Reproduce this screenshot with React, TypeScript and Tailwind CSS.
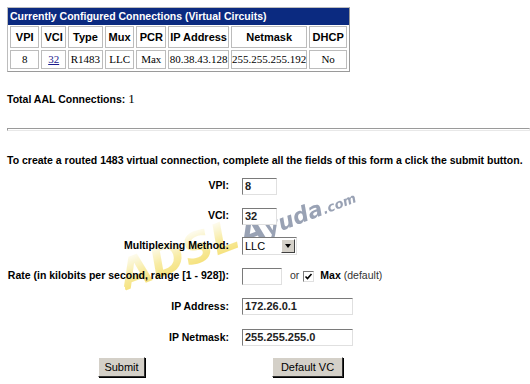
const cols = ["VPI", "VCI", "Type", "Mux", "PCR", "IP Address", "Netmask", "DHCP"];
const widths = ["w-[30px]", "w-[25px]", "w-[35px]", "w-[30px]", "w-[30px]", "w-[61px]", "w-[76px]", "w-[38px]"];

function Field({ value, w }: { value: string; w: string }) {
    return (
        <div className={`${w} h-[17px] bg-white border border-t-[#7a7a7a] border-l-[#7a7a7a] border-b-[#e0e0e0] border-r-[#e0e0e0] text-[11px] leading-[15px] pl-[2px] text-[#222]`}>
            {value}
        </div>
    );
}

export default function App() {
    return (
        <div className="relative w-[530px] h-[384px] bg-white overflow-hidden font-['Liberation_Sans',Arial,sans-serif] text-black">
            {/* connections table */}
            <div className="pt-[7px] pl-[7px]">
                <div className="w-[343px] border border-[#bdbdbd] border-r-[#9a9a9a] border-b-[#9a9a9a]">
                    <div className="h-[17px] bg-[#0b2a80] text-white font-bold text-[10.5px] leading-[17px] pl-[2px]">
                        Currently Configured Connections (Virtual Circuits)
                    </div>
                    <table className="border-separate border-spacing-[2px] mt-[-1px]">
                        <tbody>
                            <tr>
                                {cols.map((c, i) => (
                                    <td key={c} className={`${widths[i]} h-[22px] border border-[#bcbcbc] text-center font-bold text-[11px] p-0`}>
                                        {c}
                                    </td>
                                ))}
                            </tr>
                            <tr className="font-['Liberation_Serif','Times_New_Roman',serif] text-[11px]">
                                <td className="h-[19px] border border-[#bcbcbc] text-center p-0">8</td>
                                <td className="border border-[#bcbcbc] text-center p-0">
                                    <span className="text-[#1a1a8c] underline">32</span>
                                </td>
                                <td className="border border-[#bcbcbc] text-center p-0">R1483</td>
                                <td className="border border-[#bcbcbc] text-center p-0">LLC</td>
                                <td className="border border-[#bcbcbc] text-center p-0">Max</td>
                                <td className="border border-[#bcbcbc] text-center p-0">80.38.43.128</td>
                                <td className="border border-[#bcbcbc] text-center p-0">255.255.255.192</td>
                                <td className="border border-[#bcbcbc] text-center p-0">No</td>
                            </tr>
                        </tbody>
                    </table>
                </div>
            </div>

            <div className="pl-[7px] mt-[20px] text-[10.5px] font-bold leading-[14px]">
                Total AAL Connections:{" "}
                <span className="font-normal font-['Liberation_Serif','Times_New_Roman',serif] text-[13px]">1</span>
            </div>

            <div className="ml-[7px] mt-[22px] h-[3px] border border-t-[#9a9a9a] border-l-[#9a9a9a] border-b-[#e8e8e8] border-r-[#e8e8e8]" />

            <div className="pl-[7px] mt-[22px] text-[10.5px] font-bold leading-[14px] whitespace-nowrap">
                To create a routed 1483 virtual connection, complete all the fields of this form a click the submit button.
            </div>

            {/* watermark, sits under the form */}
            <div className="absolute left-[129px] top-[255px] w-[270px] h-[44px] rotate-[-21deg] origin-bottom-left pointer-events-none whitespace-nowrap font-['DejaVu_Sans',sans-serif] font-bold italic flex items-baseline leading-none">
                <span className="text-[42px] bg-linear-to-t from-[#f2d640] via-[#f7e890] to-white bg-clip-text text-transparent opacity-80">ADSL</span>
                <span className="text-[32px] text-[#8892a8] opacity-85 ml-[3px]">A</span>
                <span className="text-[22px] text-[#8892a8] opacity-85">yuda</span>
                <span className="text-[13px] text-[#8892a8] opacity-85">.com</span>
            </div>

            {/* form */}
            <div className="relative grid grid-cols-[229px_1fr] gap-x-[13px] mt-[4px] text-[10.5px] font-bold">
                <div className="h-[30px] flex items-center justify-end">VPI:</div>
                <div className="h-[30px] flex items-center"><Field value="8" w="w-[35px]" /></div>

                <div className="h-[30px] flex items-center justify-end">VCI:</div>
                <div className="h-[30px] flex items-center"><Field value="32" w="w-[35px]" /></div>

                <div className="h-[30px] flex items-center justify-end">Multiplexing Method:</div>
                <div className="h-[30px] flex items-center">
                    <div className="w-[55px] h-[18px] flex bg-white border border-t-[#7a7a7a] border-l-[#7a7a7a] border-b-[#e0e0e0] border-r-[#e0e0e0] font-normal text-[11px]">
                        <div className="flex-1 leading-[16px] pl-[2px]">LLC</div>
                        <div className="w-[14px] h-[14px] m-[1px] bg-[#d4d0c8] border border-t-white border-l-white border-b-[#404040] border-r-[#404040] flex items-center justify-center">
                            <div className="w-0 h-0 border-l-[3px] border-r-[3px] border-t-[4px] border-l-transparent border-r-transparent border-t-black" />
                        </div>
                    </div>
                </div>

                <div className="h-[30px] flex items-center justify-end whitespace-nowrap">Rate (in kilobits per second, range [1 - 928]):</div>
                <div className="h-[30px] flex items-center">
                    <Field value="" w="w-[40px]" />
                    <span className="font-normal ml-[8px] text-[#333]">or</span>
                    <div className="ml-[4px] w-[11px] h-[11px] bg-white border border-t-[#7a7a7a] border-l-[#7a7a7a] border-b-[#e0e0e0] border-r-[#e0e0e0] flex items-center justify-center">
                        <svg width="9" height="9" viewBox="0 0 9 9">
                            <path d="M1.5 4.5 L3.5 6.5 L7.5 2" stroke="#000" strokeWidth="1.6" fill="none" />
                        </svg>
                    </div>
                    <span className="ml-[6px]">Max</span>
                    <span className="ml-[3px] font-normal text-[#333]">(default)</span>
                </div>

                <div className="h-[31px] flex items-center justify-end">IP Address:</div>
                <div className="h-[31px] flex items-center"><Field value="172.26.0.1" w="w-[111px]" /></div>

                <div className="h-[31px] flex items-center justify-end">IP Netmask:</div>
                <div className="h-[31px] flex items-center"><Field value="255.255.255.0" w="w-[111px]" /></div>
            </div>

            <div className="flex mt-[4px] text-[11px]">
                <button className="ml-[98px] w-[47px] h-[20px] bg-[#d4d0c8] border border-t-white border-l-white border-b-[#303030] border-r-[#303030] shadow-[1px_1px_0_#000]">
                    Submit
                </button>
                <button className="ml-[127px] w-[71px] h-[20px] bg-[#d4d0c8] border border-t-white border-l-white border-b-[#303030] border-r-[#303030] shadow-[1px_1px_0_#000]">
                    Default VC
                </button>
            </div>
        </div>
    );
}
